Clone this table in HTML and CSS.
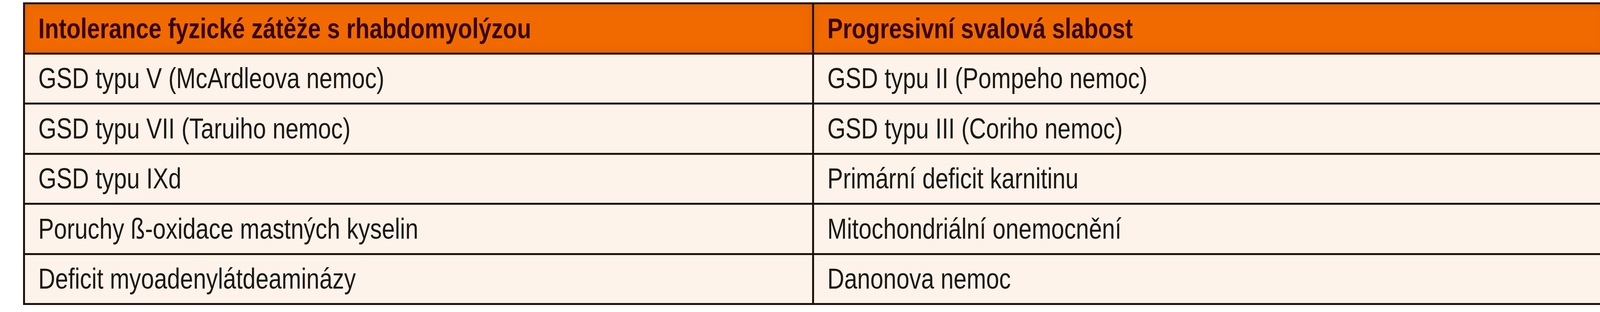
FILE: index.html
```html
<!DOCTYPE html>
<html lang="cs">
<head>
<meta charset="utf-8">
<title>Tabulka</title>
<link rel="stylesheet" href="styles.css">
</head>
<body>
<div class="table">
  <div class="cell head"><span class="txt">Intolerance fyzické zátěže s rhabdomyolýzou</span></div>
  <div class="cell head"><span class="txt">Progresivní svalová slabost</span></div>
  <div class="cell"><span class="txt">GSD typu V (McArdleova nemoc)</span></div>
  <div class="cell"><span class="txt">GSD typu II (Pompeho nemoc)</span></div>
  <div class="cell"><span class="txt">GSD typu VII (Taruiho nemoc)</span></div>
  <div class="cell"><span class="txt">GSD typu III (Coriho nemoc)</span></div>
  <div class="cell"><span class="txt">GSD typu IXd</span></div>
  <div class="cell"><span class="txt">Primární deficit karnitinu</span></div>
  <div class="cell"><span class="txt">Poruchy ß-oxidace mastných kyselin</span></div>
  <div class="cell"><span class="txt">Mitochondriální onemocnění</span></div>
  <div class="cell"><span class="txt">Deficit myoadenylátdeaminázy</span></div>
  <div class="cell"><span class="txt">Danonova nemoc</span></div>
</div>
</body>
</html>
```

FILE: styles.css
```css
html, body {
  margin: 0;
  background: #ffffff;
}
body {
  padding: 6px 0 0 59px;
  font-family: "Liberation Sans", Arial, sans-serif;
}
.table {
  display: grid;
  grid-template-columns: 2015px 2021px;
  grid-template-rows: repeat(6, 123.5px);
  gap: 5px;
  padding: 5px;
  width: fit-content;
  background: #1e140e;
}
.cell {
  display: flex;
  align-items: center;
  padding-left: 34px;
  background: #fdf3ea;
  color: #1c1712;
  font-size: 74px;
  line-height: 1;
  white-space: nowrap;
  overflow: hidden;
}
.txt {
  display: inline-block;
  transform: scaleX(0.81);
  transform-origin: left center;
}
.head {
  background: #f16a00;
  box-shadow: inset 0 0 18px rgba(170, 80, 30, 0.35), 0 5px 0 #2e0700;
  color: #360500;
  font-weight: bold;
  font-size: 73px;
  overflow: visible;
}
```
